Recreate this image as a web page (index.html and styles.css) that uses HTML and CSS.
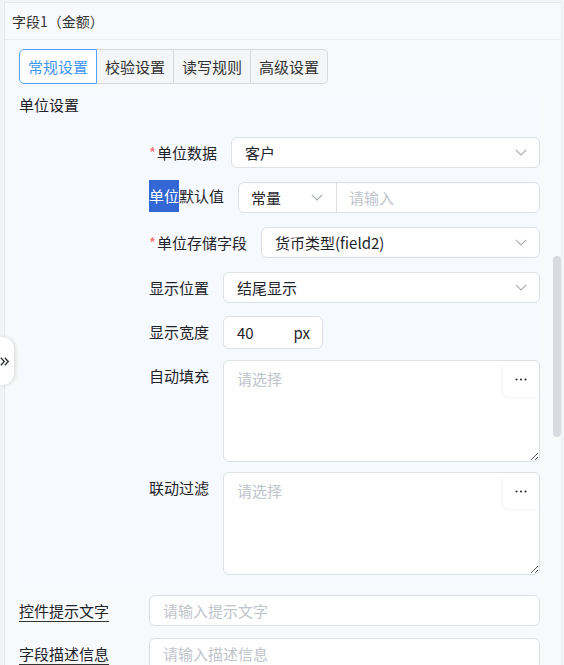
FILE: index.html
```html
<!DOCTYPE html>
<html lang="zh-CN">
<head>
<meta charset="utf-8">
<link rel="stylesheet" href="styles.css">
</head>
<body>
<div class="page">
  <div class="panel">
    <div class="header">字段1（金额）</div>
    <div class="content">
      <div class="tabs">
        <div class="tab active">常规设置</div>
        <div class="tab">校验设置</div>
        <div class="tab">读写规则</div>
        <div class="tab">高级设置</div>
      </div>
      <div class="section">
        <div class="section-title">单位设置</div>
        <div class="row r1">
          <div class="label"><span class="req">*</span>单位数据</div>
          <div class="select"><span>客户</span><svg class="chev" width="12" height="7" viewBox="0 0 12 7"><path d="M0.8 0.8 L6 6 L11.2 0.8" fill="none" stroke="#a8abb2" stroke-width="1.1"/></svg></div>
        </div>
        <div class="row r2">
          <div class="label"><span class="sel">单位</span>默认值</div>
          <div class="group">
            <div class="gsel"><span>常量</span><svg class="chev" width="12" height="7" viewBox="0 0 12 7"><path d="M0.8 0.8 L6 6 L11.2 0.8" fill="none" stroke="#a8abb2" stroke-width="1.1"/></svg></div>
            <input class="ginput" type="text" placeholder="请输入">
          </div>
        </div>
        <div class="row r3">
          <div class="label"><span class="req">*</span>单位存储字段</div>
          <div class="select"><span>货币类型(field2)</span><svg class="chev" width="12" height="7" viewBox="0 0 12 7"><path d="M0.8 0.8 L6 6 L11.2 0.8" fill="none" stroke="#a8abb2" stroke-width="1.1"/></svg></div>
        </div>
        <div class="row r4">
          <div class="label">显示位置</div>
          <div class="select"><span>结尾显示</span><svg class="chev" width="12" height="7" viewBox="0 0 12 7"><path d="M0.8 0.8 L6 6 L11.2 0.8" fill="none" stroke="#a8abb2" stroke-width="1.1"/></svg></div>
        </div>
        <div class="row r5">
          <div class="label">显示宽度</div>
          <div class="unit"><span>40</span><span>px</span></div>
        </div>
        <div class="row r6">
          <div class="label">自动填充</div>
          <div class="ta">
            <textarea placeholder="请选择"></textarea>
            <div class="more"><svg width="12" height="3" viewBox="0 0 12 3"><circle cx="1.5" cy="1.5" r="1.1" fill="#333"/><circle cx="6" cy="1.5" r="1.1" fill="#333"/><circle cx="10.5" cy="1.5" r="1.1" fill="#333"/></svg></div>
          </div>
        </div>
        <div class="row r7">
          <div class="label">联动过滤</div>
          <div class="ta ta2">
            <textarea placeholder="请选择"></textarea>
            <div class="more"><svg width="12" height="3" viewBox="0 0 12 3"><circle cx="1.5" cy="1.5" r="1.1" fill="#333"/><circle cx="6" cy="1.5" r="1.1" fill="#333"/><circle cx="10.5" cy="1.5" r="1.1" fill="#333"/></svg></div>
          </div>
        </div>
      </div>
      <div class="field f1">
        <div class="field-label"><span>控件提示文字</span></div>
        <input class="text-input" type="text" placeholder="请输入提示文字">
      </div>
      <div class="field f2">
        <div class="field-label"><span>字段描述信息</span></div>
        <input class="text-input" type="text" placeholder="请输入描述信息">
      </div>
    </div>
  </div>
  <div class="toggle"><svg width="10" height="9" viewBox="0 0 10 9"><path d="M0.8 0.8 L4.3 4.5 L0.8 8.2 M4.8 0.8 L8.3 4.5 L4.8 8.2" fill="none" stroke="#2b2f36" stroke-width="1.3"/></svg></div>
  <div class="thumb"></div>
</div>
</body>
</html>
```
FILE: styles.css
```css
html, body {
  margin: 0;
  padding: 0;
}
body {
  font-family: "Noto Sans CJK SC", "Noto Sans", sans-serif;
  font-size: 15px;
  color: #1f2329;
  background: #fff;
}
.page {
  position: relative;
  width: 564px;
  height: 665px;
  overflow: hidden;
  box-sizing: border-box;
  padding: 2px 0 0 4px;
  background: #f3f4f6;
}
.panel {
  width: 558px;
  height: 100%;
  box-sizing: border-box;
  border-top: 1px solid #e6e8eb;
  border-left: 1px solid #e6e8eb;
  border-right: 1px solid #eceef1;
  background: #f8f9fb;
}
.header {
  height: 36px;
  line-height: 36px;
  border-bottom: 1px solid #ebedf0;
  padding-left: 7px;
  font-size: 14px;
  color: #333;
}
.content {
  padding: 9px 21px 0 14px;
}
.tabs {
  display: flex;
  height: 35px;
}
.tab {
  padding: 0 8px;
  line-height: 33px;
  border: 1px solid #d9d9d9;
  border-left-width: 0;
  background: #f4f5f7;
  color: #333;
}
.tab:first-child {
  border-left-width: 1px;
  border-radius: 5px 0 0 5px;
}
.tab:last-child {
  border-radius: 0 5px 5px 0;
}
.tab.active {
  border-color: #55a3f8;
  color: #3f95f6;
  background: #fff;
}
.section {
  margin-top: 13px;
  background: #f6f9fd;
  padding-bottom: 9px;
}
.section-title {
  height: 16px;
  line-height: 16px;
  margin-bottom: 24px;
  color: #1f2329;
}
.row {
  display: flex;
  align-items: flex-start;
  padding-left: 130px;
  margin-bottom: 14px;
}
.row.r4 { margin-bottom: 13px; }
.row.r5 { margin-bottom: 11px; }
.row.r6 { margin-bottom: 10px; }
.row.r7 { margin-bottom: 0; }
.label {
  line-height: 31px;
  margin-right: 14px;
  white-space: nowrap;
  color: #1f2329;
}
.req {
  color: #f56c6c;
  margin-right: 1px;
  font-size: 15px;
}
.r2 .label {
  line-height: 32px;
  margin-top: -2px;
}
.sel {
  display: inline-block;
  background: #3367d6;
  color: #fff;
}
.select {
  flex: 1;
  height: 31px;
  box-sizing: border-box;
  border: 1px solid #dcdfe6;
  border-radius: 6px;
  background: #fff;
  display: flex;
  align-items: center;
  justify-content: space-between;
  padding: 0 12px 0 13px;
}
.chev {
  flex: none;
}
.group {
  flex: 1;
  height: 31px;
  box-sizing: border-box;
  border: 1px solid #dcdfe6;
  border-radius: 6px;
  background: #fff;
  display: flex;
  margin-left: 0;
}
.gsel {
  width: 98px;
  box-sizing: border-box;
  border-right: 1px solid #dcdfe6;
  display: flex;
  align-items: center;
  justify-content: space-between;
  padding: 0 13px 0 12px;
  flex: none;
}
.ginput {
  flex: 1;
  min-width: 0;
  border: 0;
  outline: none;
  background: transparent;
  padding: 0 12px;
  font: inherit;
  color: #1f2329;
}
input::placeholder,
textarea::placeholder {
  color: #c0c4cc;
}
.unit {
  width: 100px;
  height: 33px;
  box-sizing: border-box;
  border: 1px solid #dcdfe6;
  border-radius: 6px;
  background: #fff;
  display: flex;
  align-items: center;
  justify-content: space-between;
  padding: 0 12px 0 13px;
}
.ta {
  flex: 1;
  position: relative;
  height: 102px;
}
.ta2 {
  height: 103px;
}
.ta textarea {
  display: block;
  width: 100%;
  height: 100%;
  box-sizing: border-box;
  border: 1px solid #dcdfe6;
  border-radius: 6px;
  background: #fff;
  padding: 7px 13px;
  font: inherit;
  line-height: 21px;
  color: #1f2329;
  outline: none;
}
.more {
  position: absolute;
  top: 2px;
  right: 2px;
  width: 35px;
  height: 35px;
  background: #fff;
  border-radius: 6px;
  box-shadow: -1px 1px 3px rgba(0, 0, 0, 0.06);
  display: flex;
  align-items: center;
  justify-content: center;
}
.field {
  display: flex;
  align-items: flex-start;
}
.f1 { margin-top: 11px; }
.f2 { margin-top: 12px; }
.field-label {
  width: 130px;
  flex: none;
  padding-top: 5px;
}
.field-label span {
  display: inline-block;
  line-height: 21px;
  border-bottom: 1px solid #333;
  color: #1f2329;
}
.text-input {
  flex: 1;
  min-width: 0;
  height: 31px;
  box-sizing: border-box;
  border: 1px solid #dcdfe6;
  border-radius: 6px;
  background: #fff;
  padding: 0 13px;
  font: inherit;
  color: #1f2329;
  outline: none;
}
.toggle {
  position: absolute;
  left: 0;
  top: 337px;
  width: 14px;
  height: 48px;
  background: #fff;
  border-radius: 0 12px 12px 0;
  box-shadow: 1px 0 4px rgba(0, 0, 0, 0.14);
  display: flex;
  align-items: center;
  justify-content: flex-start;
}
.toggle svg {
  margin-left: 0;
}
.thumb {
  position: absolute;
  left: 553px;
  top: 256px;
  width: 8px;
  height: 181px;
  border-radius: 4px;
  background: #d9dbe0;
}
```
